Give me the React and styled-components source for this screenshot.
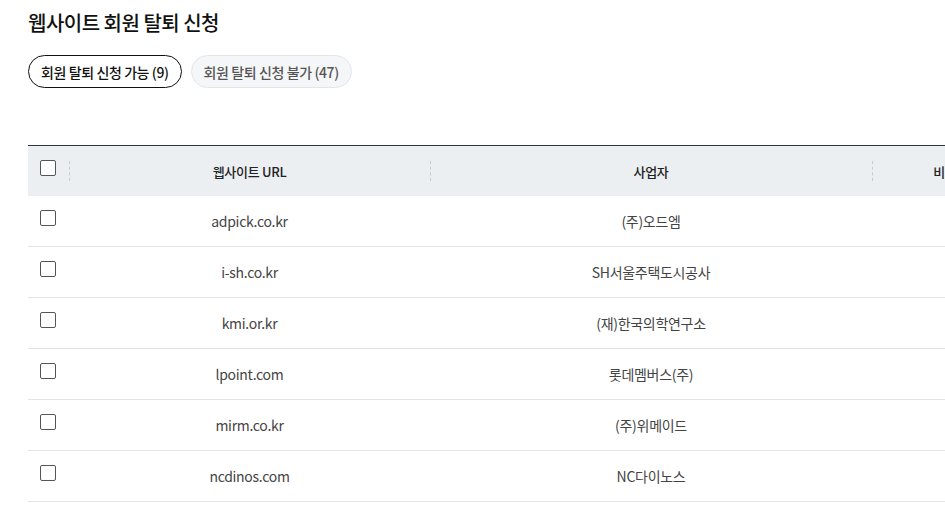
import React from "react";
import styled, { createGlobalStyle } from "styled-components";

const Global = createGlobalStyle`
  html, body { margin: 0; padding: 0; overflow: hidden; background: #fff; }
  body { font-family: "Noto Sans CJK KR", "Noto Sans", sans-serif; color: #222; }
  * { box-sizing: border-box; }
`;

const Page = styled.div`
  padding: 8px 0 0 28px;
  width: 1100px;
`;

const Title = styled.h1`
  margin: 0;
  font-size: 20px;
  font-weight: 500;
  letter-spacing: -0.5px;
  line-height: 30px;
  color: #111;
`;

const Tabs = styled.div`
  display: flex;
  gap: 9px;
  margin-top: 17px;
`;

const Tab = styled.button`
  height: 33px;
  padding: 0 12px;
  border-radius: 17px;
  font-family: inherit;
  font-size: 14px;
  font-weight: 500;
  letter-spacing: -0.4px;
  cursor: pointer;
  border: 1px solid ${(p) => (p.$active ? "#111" : "#e3e5e8")};
  background: ${(p) => (p.$active ? "#fff" : "#f5f6f7")};
  color: ${(p) => (p.$active ? "#111" : "#555")};
`;

const Table = styled.div`
  margin-top: 57px;
  width: 990px;
  border-top: 1px solid #333;
`;

const Row = styled.div`
  display: grid;
  grid-template-columns: 41px 361px 442px 146px;
  height: ${(p) => (p.$head ? "50px" : "51px")};
  background: ${(p) => (p.$head ? "#eceff2" : "#fff")};
  border-bottom: ${(p) => (p.$head ? "none" : "1px solid #e4e4e4")};
`;

const Cell = styled.div`
  position: relative;
  display: flex;
  align-items: center;
  justify-content: center;
  font-size: ${(p) => (p.$head ? "13px" : "14px")};
  font-weight: ${(p) => (p.$head ? 500 : 400)};
  color: ${(p) => (p.$head ? "#222" : "#444")};
  letter-spacing: -0.3px;
  ${(p) =>
    p.$divider &&
    `&::before {
      content: "";
      position: absolute;
      left: 0;
      top: 15px;
      height: 20px;
      border-left: 1px dashed #c8ccd2;
    }`}
`;

const CheckCell = styled.div`
  display: flex;
  align-items: flex-start;
  padding: 14px 0 0 12px;
`;

const Box = styled.span`
  display: block;
  width: 16px;
  height: 16px;
  border: 1px solid #555;
  border-radius: 2px;
  background: #fff;
`;

const rows = [
  ["adpick.co.kr", "(주)오드엠"],
  ["i-sh.co.kr", "SH서울주택도시공사"],
  ["kmi.or.kr", "(재)한국의학연구소"],
  ["lpoint.com", "롯데멤버스(주)"],
  ["mirm.co.kr", "(주)위메이드"],
  ["ncdinos.com", "NC다이노스"],
];

export default function App() {
  return (
    <>
      <Global />
      <Page>
        <Title>웹사이트 회원 탈퇴 신청</Title>
        <Tabs>
          <Tab $active>회원 탈퇴 신청 가능 (9)</Tab>
          <Tab>회원 탈퇴 신청 불가 (47)</Tab>
        </Tabs>
        <Table>
          <Row $head>
            <CheckCell>
              <Box />
            </CheckCell>
            <Cell $head $divider>웹사이트 URL</Cell>
            <Cell $head $divider>사업자</Cell>
            <Cell $head $divider>비고</Cell>
          </Row>
          {rows.map(([url, owner]) => (
            <Row key={url}>
              <CheckCell>
                <Box />
              </CheckCell>
              <Cell>{url}</Cell>
              <Cell>{owner}</Cell>
              <Cell />
            </Row>
          ))}
        </Table>
      </Page>
    </>
  );
}
